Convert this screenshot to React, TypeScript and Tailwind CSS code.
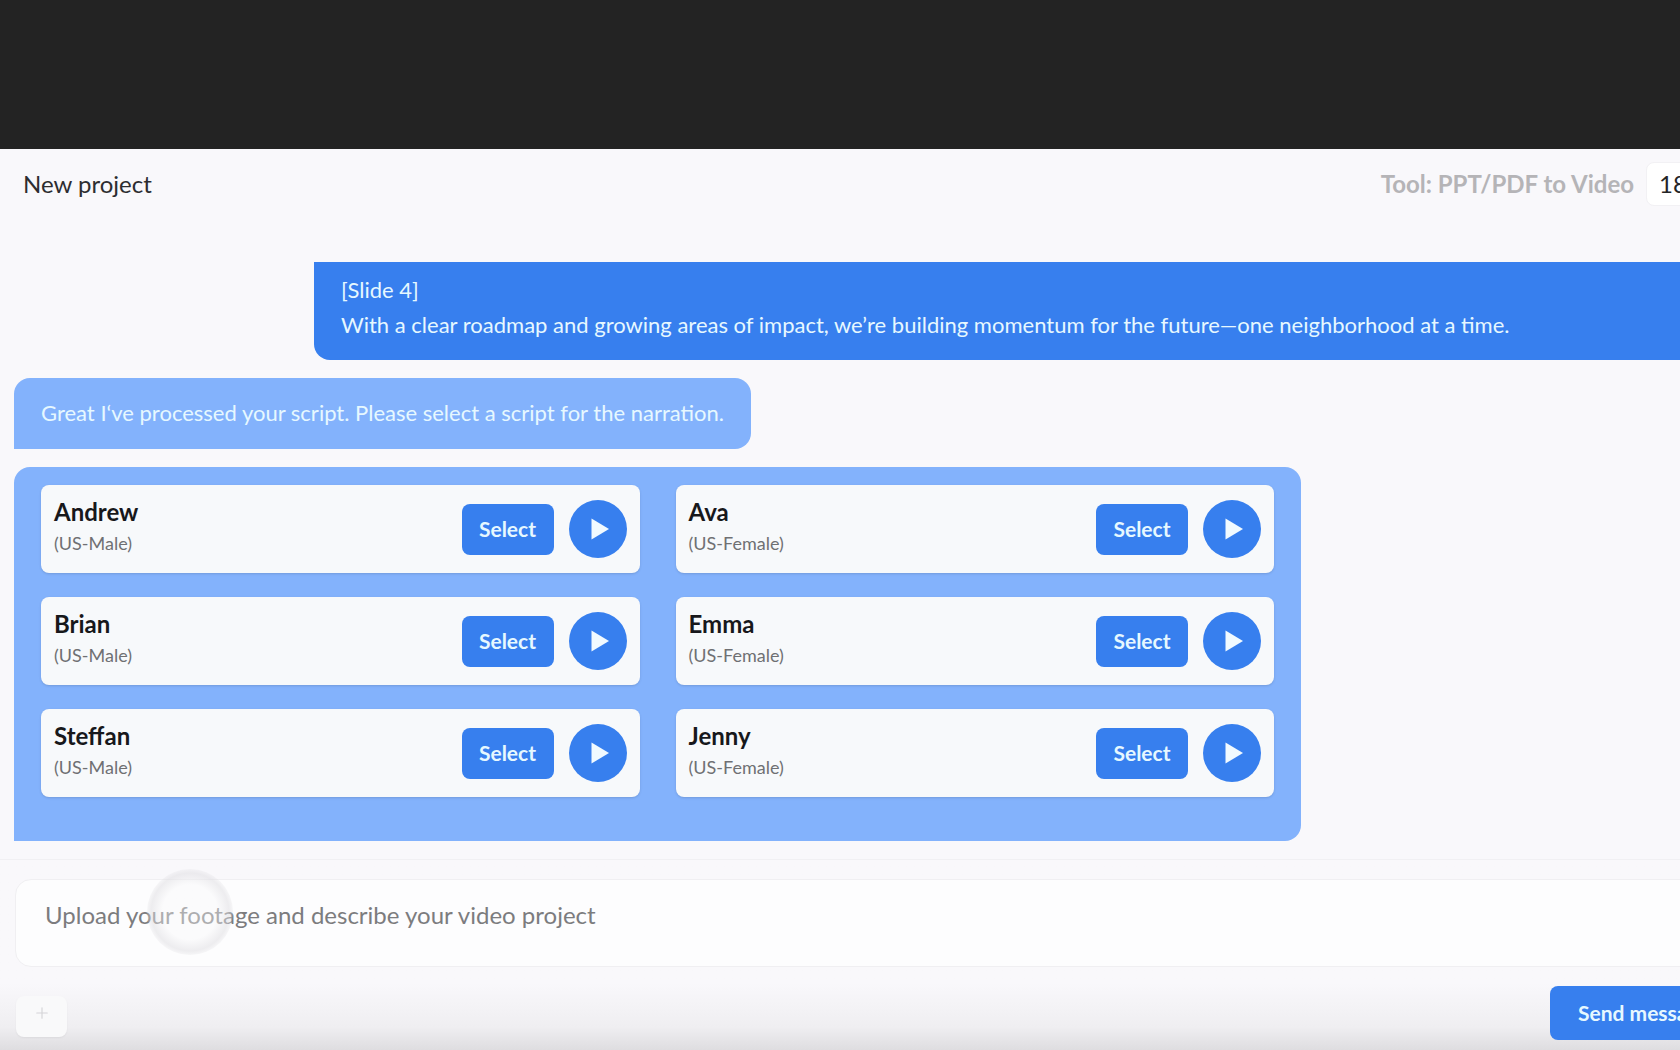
import { Plus } from "lucide-react";

type Voice = {
  name: string;
  label: string;
};

const voices: Voice[] = [
  { name: "Andrew", label: "(US-Male)" },
  { name: "Ava", label: "(US-Female)" },
  { name: "Brian", label: "(US-Male)" },
  { name: "Emma", label: "(US-Female)" },
  { name: "Steffan", label: "(US-Male)" },
  { name: "Jenny", label: "(US-Female)" },
];

const VoiceCard = ({ name, label }: Voice) => (
  <li className="flex h-[88px] items-center rounded-lg bg-[#f7f9fb] px-[13px] shadow-sm">
    <div className="flex-1 pb-[3px]">
      <h3 className="text-2xl leading-8 font-bold text-[#17181b]">{name}</h3>
      <p className="text-lg leading-[31px] text-[#6f7073]">{label}</p>
    </div>
    <button className="mr-[15px] h-[51px] w-[92px] rounded-lg bg-[#377fee] text-[21px] font-bold text-[#e6f8ff]">
      Select
    </button>
    <button
      aria-label={`Play ${name}`}
      className="flex size-[58px] items-center justify-center rounded-full bg-[#377fee]"
    >
      <svg viewBox="0 0 58 58" className="size-full fill-[#f1faff]">
        <path d="M22.5 18.5 40 29 22.5 39.5z" />
      </svg>
    </button>
  </li>
);

const Header = () => (
  <header className="flex h-[70px] items-center pl-[23px] pr-4 text-2xl">
    <h1 className="text-[#2d2d30]">New project</h1>
    <span className="ml-auto font-bold text-[#b5b4b7]">
      Tool: PPT/PDF to Video
    </span>
    <span className="ml-3 flex h-[44px] w-[84px] items-center rounded-lg border border-[#f2f1f4] bg-white pl-3 text-[#242426]">
      18
    </span>
  </header>
);

const Composer = () => (
  <footer className="flex-1 border-t border-[#f1f0f3] bg-linear-to-b from-[#f9f8fb] from-65% via-[#efeef1] via-88% to-[#dedde0] pt-[19px] pl-[15px] pr-4">
    <div className="relative">
      <input
        type="text"
        aria-label="Message"
        placeholder="Upload your footage and describe your video project"
        className="block h-[88px] w-full rounded-2xl border border-[#f0eff2] bg-[#fdfdfe] pl-[29px] pb-[18px] text-2xl text-[#7c7c7e] outline-none placeholder:text-[#7c7c7e]"
      />
      {/* touch pointer */}
      <div className="pointer-events-none absolute -top-[10px] left-[132px] size-[86px] rounded-full bg-radial from-[#f8f8f9]/40 from-45% via-[#dddce0]/50 via-64% to-[#dddce0]/20 to-71%" />
    </div>
    <div className="flex items-start justify-between pt-[19px]">
      <button
        aria-label="Add attachment"
        className="mt-[10px] ml-px flex h-[41px] w-[51px] items-center justify-center rounded-lg bg-[#f9f9fa] pb-2 text-[#d5d4d7] shadow-xs"
      >
        <Plus size={18} strokeWidth={1.5} />
      </button>
      <button className="h-[54px] w-[180px] rounded-lg bg-[#377fee] pl-7 text-left text-[21px] font-bold text-[#e6f8ff]">
        Send message
      </button>
    </div>
  </footer>
);

export default function App() {
  return (
    <div className="flex min-h-screen flex-col overflow-hidden bg-[#f9f8fb] font-['Lato',sans-serif]">
      <div className="h-[149px] bg-[#232323]" />
      {/* the workspace runs past the right edge of the window */}
      <div className="flex w-[calc(100%+66px)] flex-1 flex-col">
        <Header />
        <main className="flex flex-col gap-[18px] pt-[43px] pb-[18px] pl-[14px] pr-4">
          <div className="ml-[300px] rounded-b-2xl bg-[#377fee] px-[27px] pt-[10px] pb-[18px] text-[22px] leading-[35px] text-[#e6f8ff]">
            <p>[Slide 4]</p>
            <p>
              With a clear roadmap and growing areas of impact, we’re building
              momentum for the future—one neighborhood at a time.
            </p>
          </div>
          <div className="self-start rounded-t-2xl rounded-br-2xl bg-[#83b2fc] px-[27px] pt-[17px] pb-[19px] text-[22px] leading-[35px] text-[#e6f8ff]">
            Great I‘ve processed your script. Please select a script for the
            narration.
          </div>
          <ul className="grid w-3/4 grid-cols-2 gap-x-9 gap-y-6 rounded-t-2xl rounded-br-2xl bg-[#83b2fc] px-[27px] pt-[18px] pb-[44px]">
            {voices.map(voice => (
              <VoiceCard key={voice.name} {...voice} />
            ))}
          </ul>
        </main>
        <Composer />
      </div>
    </div>
  );
}
